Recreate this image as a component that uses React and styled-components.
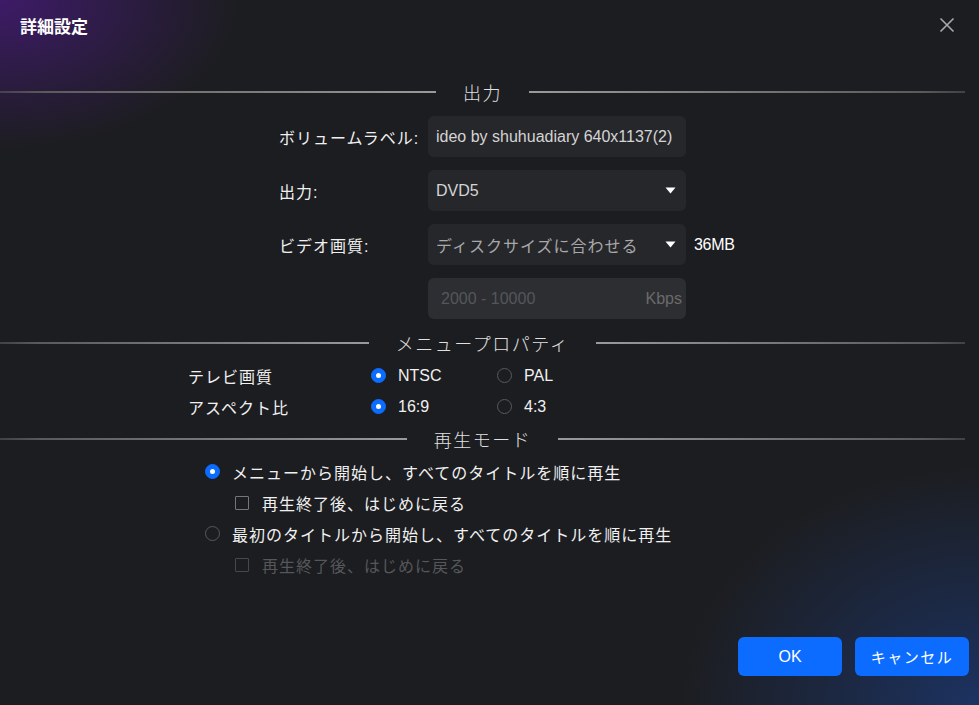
import React from 'react';
import styled, { createGlobalStyle } from 'styled-components';

const GlobalStyle = createGlobalStyle`
  html, body {
    margin: 0;
    padding: 0;
    background: #1c1d20;
  }
`;

const Dialog = styled.div`
  width: 979px;
  height: 705px;
  display: flex;
  flex-direction: column;
  overflow: hidden;
  background:
    radial-gradient(ellipse 240px 150px at 0 0, rgba(70, 26, 122, 0.8), rgba(70, 26, 122, 0) 100%),
    radial-gradient(ellipse 300px 240px at 100% 100%, rgba(28, 64, 140, 0.6), rgba(28, 64, 140, 0) 100%),
    #1c1d20;
  font-family: "Liberation Sans", "Noto Sans CJK JP", sans-serif;
  color: #e8e8e8;
`;

const Header = styled.div`
  height: 50px;
  display: flex;
  align-items: center;
  justify-content: space-between;
  padding: 0 24px 0 20px;
`;

const Title = styled.h1`
  margin: 0;
  font-family: "Noto Sans CJK JP", sans-serif;
  font-size: 17px;
  font-weight: 700;
  color: #ffffff;
`;

const CloseButton = styled.button`
  width: 16px;
  height: 16px;
  padding: 0;
  border: 0;
  background: none;
  display: flex;
  cursor: pointer;
`;

const Divider = styled.div`
  height: 24px;
  display: flex;
  align-items: center;
  gap: 27px;
  padding-right: 14px;
  margin-top: ${p => p.$top}px;
`;

const Line = styled.div`
  flex: 1;
  height: 2px;
  background: linear-gradient(${p => (p.$right ? '90deg' : '270deg')}, #9a9a9a, #5a5a5a 90%, rgba(90, 90, 90, 0.6));
`;

const DividerText = styled.span`
  font-family: "Noto Sans CJK JP", sans-serif;
  font-weight: 300;
  font-size: 18px;
  letter-spacing: 1.5px;
  color: #e0e0e0;
`;

const FormGrid = styled.div`
  margin-top: 12px;
  padding-left: 279px;
  display: grid;
  grid-template-columns: 149px 258px auto;
  row-gap: 13px;
  align-items: center;
`;

const Label = styled.span`
  font-size: 16px;
  letter-spacing: 1px;
  color: #f0f0f0;
`;

const Field = styled.div`
  height: 41px;
  box-sizing: border-box;
  padding: 0 10px 0 ${p => (p.$disabled ? 13 : 8)}px;
  border-radius: 6px;
  background: ${p => (p.$disabled ? '#2d2e32' : '#26272b')};
  display: flex;
  align-items: center;
  justify-content: space-between;
  font-size: 16px;
  color: ${p => p.$muted ? '#a8a8a8' : '#d4d4d4'};
  letter-spacing: ${p => (p.$jp ? '1px' : '0')};
  white-space: nowrap;
  overflow: hidden;
`;

const Placeholder = styled.span`
  color: ${p => (p.$unit ? '#6a6a6a' : '#55565a')};
  margin-right: ${p => (p.$unit ? '-6px' : '0')};
`;

const SizeText = styled.span`
  margin-left: 8px;
  font-size: 16px;
  color: #ffffff;
  letter-spacing: -0.3px;
`;

const MenuGrid = styled.div`
  margin-top: 5px;
  padding-left: 188px;
  display: grid;
  grid-template-columns: 183px 126px auto;
  grid-auto-rows: 31px;
  align-items: center;
`;

const Option = styled.label`
  display: flex;
  align-items: center;
  gap: ${p => p.$gap || 12}px;
  font-size: 16px;
  letter-spacing: ${p => (p.$jp ? '1px' : '0')};
  color: ${p => (p.$disabled ? '#56575b' : '#f0f0f0')};
`;

const Radio = styled.span`
  width: 15px;
  height: 15px;
  box-sizing: border-box;
  border-radius: 50%;
  flex-shrink: 0;
  display: flex;
  align-items: center;
  justify-content: center;
  background: ${p => (p.$checked ? '#0b6cff' : 'transparent')};
  border: 1px solid ${p => (p.$checked ? '#0b6cff' : '#58595d')};
  &::after {
    content: '';
    width: 5px;
    height: 5px;
    border-radius: 50%;
    background: ${p => (p.$checked ? '#ffffff' : 'transparent')};
  }
`;

const Checkbox = styled.span`
  width: 14px;
  height: 14px;
  box-sizing: border-box;
  flex-shrink: 0;
  border: 1px solid ${p => (p.$disabled ? '#47484c' : '#75767a')};
  border-radius: 1px;
`;

const PlayList = styled.div`
  margin-top: 5px;
  padding-left: 205px;
  display: grid;
  grid-auto-rows: 31px;
  align-items: center;
`;

const SubOption = styled.div`
  padding-left: 30px;
`;

const Footer = styled.div`
  margin-top: auto;
  display: flex;
  justify-content: flex-end;
  gap: 13px;
  padding: 0 10px 29px;
`;

const Button = styled.button`
  width: ${p => p.$w}px;
  height: 39px;
  border: 0;
  border-radius: 6px;
  background: #0b6cff;
  color: #ffffff;
  font-family: "Liberation Sans", "Noto Sans CJK JP", sans-serif;
  font-size: ${p => (p.$jp ? 15 : 16)}px;
  letter-spacing: ${p => (p.$jp ? '1.5px' : '0')};
  cursor: pointer;
`;

const Caret = () => (
  <svg width="11" height="7" viewBox="0 0 11 7">
    <path d="M0.5 0.5 H10.5 L5.5 6.5 Z" fill="#ffffff" />
  </svg>
);

function Section({ top, children }) {
  return (
    <Divider $top={top}>
      <Line />
      <DividerText>{children}</DividerText>
      <Line $right />
    </Divider>
  );
}

export default function App() {
  return (
    <>
      <GlobalStyle />
      <Dialog>
        <Header>
          <Title>詳細設定</Title>
          <CloseButton aria-label="close">
            <svg width="16" height="16" viewBox="0 0 16 16">
              <path d="M1.5 1.5 L14.5 14.5 M14.5 1.5 L1.5 14.5" stroke="#a9a9ab" strokeWidth="1.6" />
            </svg>
          </CloseButton>
        </Header>

        <Section top={30}>出力</Section>
        <FormGrid>
          <Label>ボリュームラベル:</Label>
          <Field>ideo by shuhuadiary 640x1137(2)</Field>
          <span />

          <Label>出力:</Label>
          <Field>
            DVD5
            <Caret />
          </Field>
          <span />

          <Label>ビデオ画質:</Label>
          <Field $jp $muted>
            ディスクサイズに合わせる
            <Caret />
          </Field>
          <SizeText>36MB</SizeText>

          <span />
          <Field $disabled>
            <Placeholder>2000 - 10000</Placeholder>
            <Placeholder $unit>Kbps</Placeholder>
          </Field>
          <span />
        </FormGrid>

        <Section top={12}>メニュープロパティ</Section>
        <MenuGrid>
          <Label>テレビ画質</Label>
          <Option><Radio $checked />NTSC</Option>
          <Option><Radio />PAL</Option>
          <Label>アスペクト比</Label>
          <Option><Radio $checked />16:9</Option>
          <Option><Radio />4:3</Option>
        </MenuGrid>

        <Section top={5}>再生モード</Section>
        <PlayList>
          <Option $jp><Radio $checked />メニューから開始し、すべてのタイトルを順に再生</Option>
          <SubOption>
            <Option $jp $gap={13}><Checkbox />再生終了後、はじめに戻る</Option>
          </SubOption>
          <Option $jp><Radio />最初のタイトルから開始し、すべてのタイトルを順に再生</Option>
          <SubOption>
            <Option $jp $gap={13} $disabled><Checkbox $disabled />再生終了後、はじめに戻る</Option>
          </SubOption>
        </PlayList>

        <Footer>
          <Button $w={104}>OK</Button>
          <Button $w={114} $jp>キャンセル</Button>
        </Footer>
      </Dialog>
    </>
  );
}
